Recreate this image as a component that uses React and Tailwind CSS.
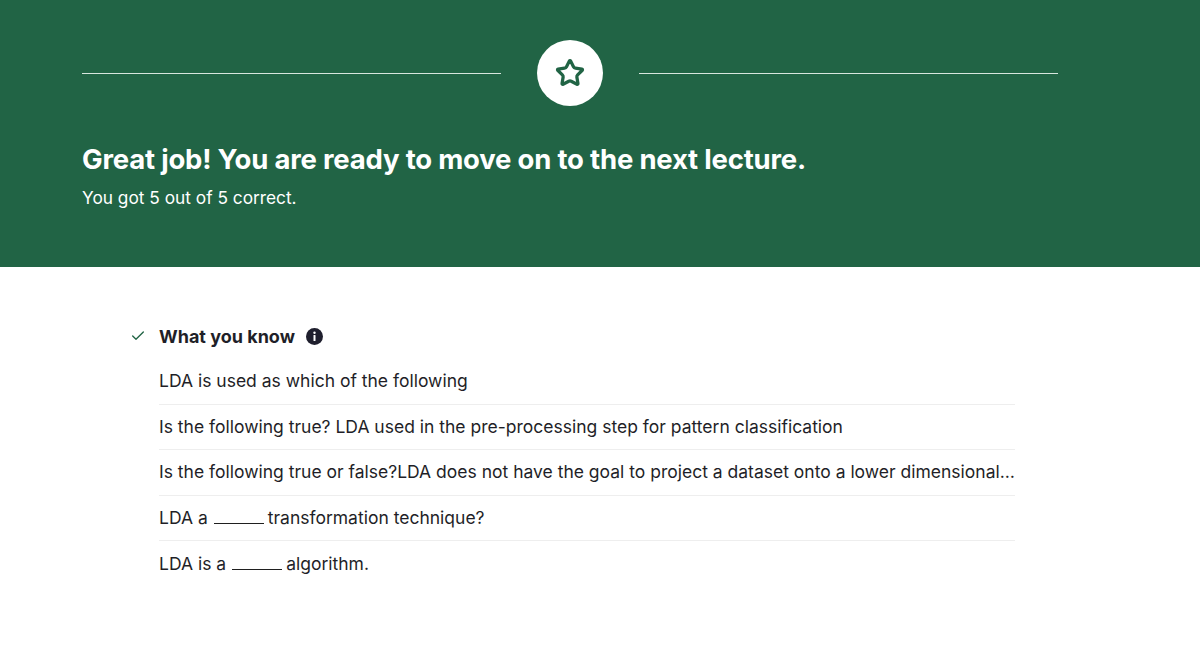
import React from "react";
import { Star, Check } from "lucide-react";

const Blank = () => (
  <span className="inline-block w-[50px] border-b-[1.5px] border-[#1f1f1f] ml-[6px] mr-[4px] h-[1px] align-baseline" />
);

const items = [
  <>LDA is used as which of the following</>,
  <>Is the following true? LDA used in the pre-processing step for pattern classification</>,
  <>Is the following true or false?LDA does not have the goal to project a dataset onto a lower dimensional space with good class-separability in order avoid overfitting</>,
  <>LDA a<Blank />transformation technique?</>,
  <>LDA is a<Blank />algorithm.</>,
];

export default function App() {
  return (
    <div className="w-[1200px] h-[671px] bg-white overflow-hidden" style={{ fontFamily: "Inter, 'Open Sans', sans-serif" }}>
      <div className="bg-[#216445] h-[267px] px-[82px] pt-[40px]">
        <div className="flex items-center w-[976px]">
          <div className="flex-1 h-px bg-[#d8e6de]" />
          <div className="mx-[36px] w-[66px] h-[66px] rounded-full bg-white flex items-center justify-center">
            <Star size={30} strokeWidth={2.6} color="#216445" />
          </div>
          <div className="flex-1 h-px bg-[#d8e6de]" />
        </div>
        <h1 className="mt-[36px] text-white text-[27.5px] font-bold leading-[34px] tracking-[-0.2px]">
          Great job! You are ready to move on to the next lecture.
        </h1>
        <p className="mt-[12px] text-white text-[17.3px] leading-[20px]">You got 5 out of 5 correct.</p>
      </div>
      <div className="pl-[130px] pt-[56px]">
        <div className="flex items-center h-[26px]">
          <Check size={16} strokeWidth={2} color="#216445" className="mr-[13px]" />
          <span className="text-[18px] font-bold text-[#1f1f28]">What you know</span>
          <svg width="17" height="17" viewBox="0 0 17 17" className="ml-[11px]">
            <circle cx="8.5" cy="8.5" r="8.5" fill="#1f1f2e" />
            <circle cx="8.5" cy="4.8" r="1.2" fill="#fff" />
            <rect x="7.5" y="7" width="2" height="6" rx="0.6" fill="#fff" />
          </svg>
        </div>
        <div className="ml-[29px] w-[856px] mt-[10px]">
          {items.map((it, i) => (
            <div
              key={i}
              className={`h-[45.5px] flex items-center text-[17.5px] text-[#1f1f28] ${i < items.length - 1 ? "border-b border-[#eeeeee]" : ""}`}
            >
              <span className="truncate block">{it}</span>
            </div>
          ))}
        </div>
      </div>
    </div>
  );
}
